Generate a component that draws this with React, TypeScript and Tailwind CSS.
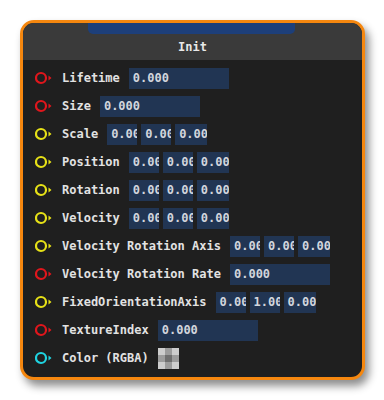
import React from 'react';

type Pin = 'red' | 'yellow' | 'cyan';

interface Row {
  label: string;
  pin: Pin;
  values?: string[];
  color?: boolean;
}

const rows: Row[] = [
  { label: 'Lifetime', pin: 'red', values: ['0.000'] },
  { label: 'Size', pin: 'red', values: ['0.000'] },
  { label: 'Scale', pin: 'yellow', values: ['0.000', '0.000', '0.000'] },
  { label: 'Position', pin: 'yellow', values: ['0.000', '0.000', '0.000'] },
  { label: 'Rotation', pin: 'yellow', values: ['0.000', '0.000', '0.000'] },
  { label: 'Velocity', pin: 'yellow', values: ['0.000', '0.000', '0.000'] },
  { label: 'Velocity Rotation Axis', pin: 'yellow', values: ['0.000', '0.000', '0.000'] },
  { label: 'Velocity Rotation Rate', pin: 'red', values: ['0.000'] },
  { label: 'FixedOrientationAxis', pin: 'yellow', values: ['0.000', '1.000', '0.000'] },
  { label: 'TextureIndex', pin: 'red', values: ['0.000'] },
  { label: 'Color (RGBA)', pin: 'cyan', color: true },
];

const pinColors: Record<Pin, string> = {
  red: '#e0161c',
  yellow: '#e6e117',
  cyan: '#1fd3e0',
};

function PinIcon({ pin }: { pin: Pin }) {
  const c = pinColors[pin];
  return (
    <svg width="18" height="14" viewBox="0 0 18 14" className="shrink-0">
      <circle cx="6" cy="7" r="5" fill="none" stroke={c} strokeWidth="2.2" />
      <polygon points="13.5,4.5 16.5,7 13.5,9.5" fill={c} />
    </svg>
  );
}

function Field({ value, width }: { value: string; width: string }) {
  return (
    <div className={`${width} h-[21px] bg-[#213553] overflow-hidden pl-[4px] flex items-center text-[#d2d6dd] whitespace-nowrap`}>
      {value}
    </div>
  );
}

function Checker() {
  const cells = ['#cdcdcd', '#9c9c9c', '#cdcdcd', '#9c9c9c', '#6f6f6f', '#9c9c9c', '#cdcdcd', '#9c9c9c', '#cdcdcd'];
  return (
    <div className="grid grid-cols-3 w-[21px] h-[21px]">
      {cells.map((c, i) => (
        <div key={i} style={{ backgroundColor: c }} />
      ))}
    </div>
  );
}

export default function App() {
  return (
    <div className="w-[384px] h-[400px] bg-white pt-[20px] pl-[20px]" style={{ fontFamily: '"DejaVu Sans Mono", monospace' }}>
      <div className="w-[345px] border-[3px] border-[#f5870f] rounded-[14px] bg-[#1f1f1f] overflow-hidden shadow-[4px_6px_8px_rgba(0,0,0,0.45)] text-[12px] leading-[14px] font-bold">
        <div className="relative h-[37px] bg-[#3a3a3a] flex justify-center pt-[17px] text-[#e8e8e8]">
          <div className="absolute left-[65px] top-0 w-[207px] h-[11px] bg-[#1d3f7a] rounded-b-[5px]" />
          <span>Init</span>
        </div>
        <div className="pt-[4px] pb-[5px]">
          {rows.map((r) => (
            <div key={r.label} className="h-[28px] flex items-center pl-[12px]">
              <PinIcon pin={r.pin} />
              <span className="ml-[9px] text-[#e2e2e2] whitespace-pre">{r.label}</span>
              <div className="ml-[9px] flex gap-[4px]">
                {r.color && <Checker />}
                {r.values && r.values.length === 1 && <Field value={r.values[0]} width="w-[100px]" />}
                {r.values && r.values.length === 3 && (
                  <>
                    <Field value={r.values[0]} width="w-[30px]" />
                    <Field value={r.values[1]} width="w-[30px]" />
                    <Field value={r.values[2]} width="w-[32px]" />
                  </>
                )}
              </div>
            </div>
          ))}
        </div>
      </div>
    </div>
  );
}
